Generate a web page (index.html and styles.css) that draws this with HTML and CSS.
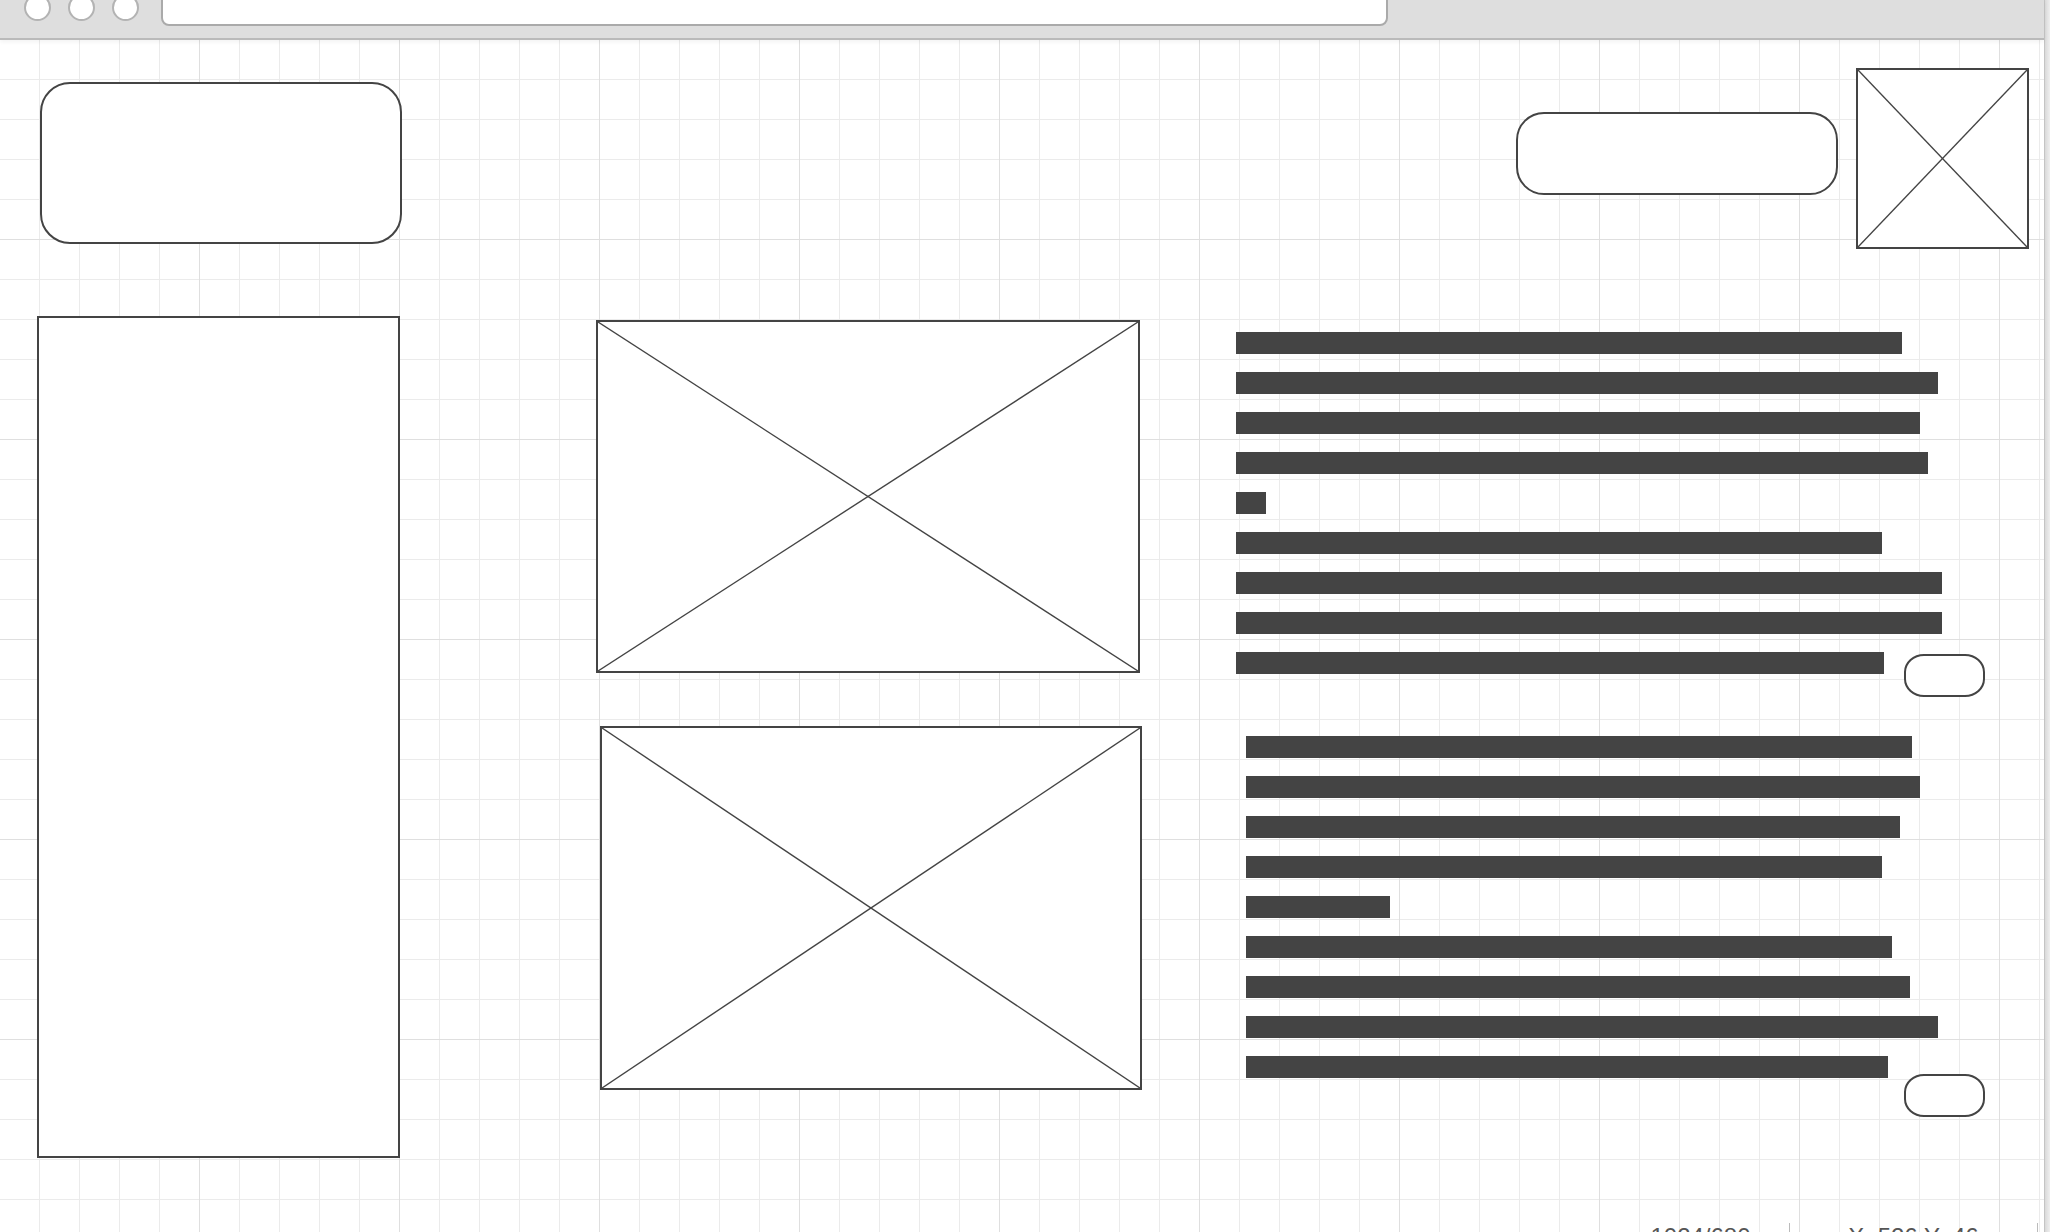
FILE: index.html
```html
<!DOCTYPE html>
<html lang="en">
<head>
<meta charset="utf-8">
<title>Wireframe</title>
<link rel="stylesheet" href="styles.css">
</head>
<body>
<div class="window">
  <div class="main">
    <div class="topbar">
      <span class="dot"></span>
      <span class="dot"></span>
      <span class="dot dot-last"></span>
      <div class="url"></div>
    </div>
    <div class="canvas">
      <header class="header">
        <div class="box logo"></div>
        <div class="box search"></div>
        <div class="box ph avatar">
          <svg class="x" viewBox="0 0 100 100" preserveAspectRatio="none"><line x1="0" y1="0" x2="100" y2="100"/><line x1="100" y1="0" x2="0" y2="100"/></svg>
        </div>
      </header>
      <div class="content">
        <aside class="box sidebar"></aside>
        <div class="media">
          <div class="box ph img1">
            <svg class="x" viewBox="0 0 100 100" preserveAspectRatio="none"><line x1="0" y1="0" x2="100" y2="100"/><line x1="100" y1="0" x2="0" y2="100"/></svg>
          </div>
          <div class="box ph img2">
            <svg class="x" viewBox="0 0 100 100" preserveAspectRatio="none"><line x1="0" y1="0" x2="100" y2="100"/><line x1="100" y1="0" x2="0" y2="100"/></svg>
          </div>
        </div>
        <div class="text">
          <div class="para p1">
            <div class="line" style="width:666px"></div>
            <div class="line" style="width:702px"></div>
            <div class="line" style="width:684px"></div>
            <div class="line" style="width:692px"></div>
            <div class="line" style="width:30px"></div>
            <div class="line" style="width:646px"></div>
            <div class="line" style="width:706px"></div>
            <div class="line" style="width:706px"></div>
            <div class="last-row">
              <div class="line" style="width:648px"></div>
              <div class="box btn btn1"></div>
            </div>
          </div>
          <div class="para p2">
            <div class="line" style="width:666px"></div>
            <div class="line" style="width:674px"></div>
            <div class="line" style="width:654px"></div>
            <div class="line" style="width:636px"></div>
            <div class="line" style="width:144px"></div>
            <div class="line" style="width:646px"></div>
            <div class="line" style="width:664px"></div>
            <div class="line" style="width:692px"></div>
            <div class="last-row">
              <div class="line" style="width:642px"></div>
              <div class="box btn btn2"></div>
            </div>
          </div>
        </div>
      </div>
      <footer class="status">
        <span class="cell cell-size">1024/680</span>
        <span class="sep"></span>
        <span class="cell cell-pos">X: 526 Y: 46</span>
        <span class="sep"></span>
      </footer>
    </div>
  </div>
  <div class="scroll"></div>
</div>
</body>
</html>
```
FILE: styles.css
```css
html, body {
  margin: 0;
  padding: 0;
  background: #fff;
  overflow: hidden;
}

.window {
  display: flex;
  width: 2050px;
  height: 1232px;
  font-family: "Liberation Sans", Arial, sans-serif;
}

.main {
  width: 2044px;
  flex-shrink: 0;
  display: flex;
  flex-direction: column;
}

.scroll {
  flex: 1;
  box-sizing: border-box;
  border-left: 1px solid #c4c4c4;
  background: linear-gradient(to right, #d9d9d9, #efefef);
}

/* ---------- browser chrome ---------- */
.topbar {
  position: relative;
  z-index: 1;
  height: 38px;
  flex-shrink: 0;
  display: flex;
  align-items: flex-start;
  padding-left: 24px;
  background: #dedede;
  border-bottom: 2px solid #bababa;
  box-shadow: 0 2px 4px rgba(0, 0, 0, 0.05);
}

.dot {
  flex-shrink: 0;
  box-sizing: border-box;
  width: 27px;
  height: 27px;
  margin-top: -6px;
  margin-right: 17px;
  border: 2px solid #b3b3b3;
  border-radius: 50%;
  background: #fff;
}

.dot-last {
  margin-right: 22px;
}

.url {
  flex-shrink: 0;
  box-sizing: border-box;
  width: 1227px;
  height: 36px;
  margin-top: -10px;
  border: 2px solid #aaaaaa;
  border-radius: 8px;
  background: #fff;
}

/* ---------- grid canvas ---------- */
.canvas {
  height: 1192px;
  overflow: hidden;
  display: flex;
  flex-direction: column;
  background-color: #fff;
  background-image:
    linear-gradient(to right, transparent 199px, #dfdfdf 199px, #dfdfdf 200px, transparent 200px),
    linear-gradient(to bottom, transparent 199px, #dfdfdf 199px, #dfdfdf 200px, transparent 200px),
    linear-gradient(to right, transparent 39px, #ebebeb 39px, #ebebeb 40px, transparent 40px),
    linear-gradient(to bottom, transparent 39px, #ebebeb 39px, #ebebeb 40px, transparent 40px);
  background-size: 200px 200px, 200px 200px, 40px 40px, 40px 40px;
}

.box {
  flex-shrink: 0;
  box-sizing: border-box;
  border: 2px solid #444;
  background: #fff;
}

.ph {
  display: flex;
}

.x {
  width: 100%;
  height: 100%;
  display: block;
}

.x line {
  stroke: #444;
  stroke-width: 1.4;
  vector-effect: non-scaling-stroke;
}

/* ---------- header ---------- */
.header {
  display: flex;
  align-items: flex-start;
  flex-shrink: 0;
}

.logo {
  width: 362px;
  height: 162px;
  margin-left: 40px;
  margin-top: 42px;
  border-radius: 30px;
}

.search {
  width: 322px;
  height: 83px;
  margin-left: auto;
  margin-top: 72px;
  border-radius: 28px;
}

.avatar {
  width: 173px;
  height: 181px;
  margin-left: 18px;
  margin-right: 15px;
  margin-top: 28px;
}

/* ---------- content ---------- */
.content {
  display: flex;
  align-items: flex-start;
  flex-shrink: 0;
}

.sidebar {
  width: 363px;
  height: 842px;
  margin-left: 37px;
  margin-top: 67px;
}

.media {
  width: 546px;
  flex-shrink: 0;
  margin-left: 196px;
  margin-top: 71px;
  display: flex;
  flex-direction: column;
  align-items: flex-start;
}

.img1 {
  width: 544px;
  height: 353px;
}

.img2 {
  width: 542px;
  height: 364px;
  margin-left: 4px;
  margin-top: 53px;
}

.text {
  width: 749px;
  flex-shrink: 0;
  margin-left: 94px;
  margin-top: 83px;
  display: flex;
  flex-direction: column;
}

.para {
  display: flex;
  flex-direction: column;
  gap: 18px;
}

.p2 {
  margin-top: 39px;
  padding-left: 10px;
}

.line {
  height: 22px;
  background: #444;
  flex-shrink: 0;
}

.last-row {
  display: flex;
  align-items: flex-start;
}

.btn {
  width: 81px;
  height: 43px;
  margin-left: auto;
  border-radius: 20px / 18px;
}

.btn1 {
  margin-top: 2px;
}

.btn2 {
  margin-top: 18px;
}

/* ---------- status bar ---------- */
.status {
  display: flex;
  justify-content: flex-end;
  flex-shrink: 0;
  height: 35px;
  margin-top: auto;
  margin-bottom: -26px;
  margin-right: 6px;
  font-size: 24px;
  line-height: 28px;
  color: #555;
}

.cell {
  text-align: center;
  white-space: nowrap;
}

.cell-size {
  width: 177px;
}

.cell-pos {
  width: 247px;
}

.sep {
  width: 1px;
  background: #bbb;
}
```
